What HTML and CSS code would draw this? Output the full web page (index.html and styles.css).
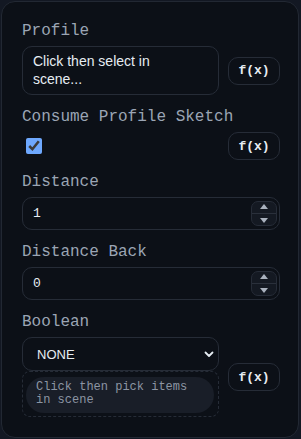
FILE: index.html
```html
<!DOCTYPE html>
<html lang="en">
<head>
<meta charset="utf-8">
<title>Extrude</title>
<link rel="stylesheet" href="styles.css">
</head>
<body>
<div class="panel">
  <div class="field">
    <div class="label">Profile</div>
    <div class="row">
      <div class="picker">Click then select in scene...</div>
      <button class="fx">f(x)</button>
    </div>
  </div>

  <div class="field">
    <div class="label">Consume Profile Sketch</div>
    <div class="row">
      <div class="check-wrap"><input type="checkbox" class="check" checked></div>
      <button class="fx">f(x)</button>
    </div>
  </div>

  <div class="field">
    <div class="label">Distance</div>
    <div class="number">
      <input class="num-input" type="text" value="1">
      <span class="spin"><span class="up"></span><span class="sep"></span><span class="down"></span></span>
    </div>
  </div>

  <div class="field">
    <div class="label">Distance Back</div>
    <div class="number">
      <input class="num-input" type="text" value="0">
      <span class="spin"><span class="up"></span><span class="sep"></span><span class="down"></span></span>
    </div>
  </div>

  <div class="field">
    <div class="label">Boolean</div>
    <div class="row">
      <div class="bool-col">
        <div class="select">
          <span>NONE</span>
          <svg class="chev" width="10" height="7" viewBox="0 0 10 7"><path d="M1.5 1.5 L5 5 L8.5 1.5" fill="none" stroke="#e6edf3" stroke-width="1.8" stroke-linecap="round" stroke-linejoin="round"/></svg>
        </div>
        <div class="items">
          <div class="pill">Click then pick items in scene</div>
        </div>
      </div>
      <button class="fx">f(x)</button>
    </div>
  </div>
</div>
</body>
</html>
```

FILE: styles.css
```css
html, body {
  margin: 0;
  padding: 0;
  background: #131823;
}
body {
  padding: 1px 0 0 1px;
  width: 301px;
  height: 439px;
  box-sizing: border-box;
  overflow: hidden;
}
.panel {
  width: 298px;
  height: 437px;
  box-sizing: border-box;
  background: #0c1017;
  border: 1px solid #222833;
  border-radius: 14px;
  padding: 19px 18px 19px 20px;
  display: flex;
  flex-direction: column;
  gap: 12px;
}
.field {
  display: flex;
  flex-direction: column;
  gap: 5px;
}
.label {
  font-family: "Liberation Mono", monospace;
  font-size: 16px;
  line-height: 20px;
  color: #9ba5b4;
}
.row {
  display: flex;
  align-items: center;
  gap: 9px;
}
.picker {
  flex: 1;
  height: 49px;
  box-sizing: border-box;
  border: 1px solid #262c37;
  border-radius: 10px;
  padding: 5px 40px 5px 10px;
  font-family: "Liberation Sans", Arial, sans-serif;
  font-size: 14px;
  line-height: 18px;
  color: #e6edf3;
}
.fx {
  width: 52px;
  height: 28px;
  box-sizing: border-box;
  background: transparent;
  border: 1px solid #262c37;
  border-radius: 10px;
  font-family: "Liberation Mono", monospace;
  font-weight: bold;
  font-size: 13px;
  color: #e6edf3;
  padding: 0;
  margin: 0;
}
.check-wrap {
  flex: 1;
  display: flex;
  align-items: center;
}
.check {
  width: 16px;
  height: 16px;
  margin: 0 0 0 4px;
  accent-color: #6ea8fe;
}
.number {
  display: flex;
  align-items: center;
  height: 33px;
  box-sizing: border-box;
  border: 1px solid #262c37;
  border-radius: 10px;
  padding: 0 2px 0 10px;
}
.num-input {
  flex: 1;
  min-width: 0;
  background: transparent;
  border: none;
  outline: none;
  padding: 0;
  font-family: "Liberation Mono", monospace;
  font-size: 13px;
  color: #e6edf3;
}
.spin {
  width: 26px;
  height: 25px;
  box-sizing: border-box;
  border: 1px solid #262c37;
  border-radius: 7px;
  background: #141922;
  display: flex;
  flex-direction: column;
  align-items: center;
  justify-content: center;
  gap: 4px;
}
.sep {
  width: 24px;
  height: 1px;
  background: #2a303b;
}
.up, .down {
  width: 0;
  height: 0;
  border-left: 4.5px solid transparent;
  border-right: 4.5px solid transparent;
}
.up { border-bottom: 5px solid #a9b1bd; }
.down { border-top: 5px solid #a9b1bd; }
.bool-col {
  flex: 1;
  display: flex;
  flex-direction: column;
}
.select {
  height: 34px;
  box-sizing: border-box;
  border: 1px solid #262c37;
  border-radius: 10px;
  display: flex;
  align-items: center;
  justify-content: space-between;
  padding: 0 4px 0 14px;
  font-family: "Liberation Sans", Arial, sans-serif;
  font-size: 13px;
  color: #e6edf3;
}
.chev { display: block; }
.items {
  height: 46px;
  box-sizing: border-box;
  border: 1px dashed #262c37;
  border-radius: 8px;
  padding: 5px 4px 3px 3px;
}
.pill {
  height: 36px;
  box-sizing: border-box;
  background: #191e28;
  border-radius: 18px;
  padding: 4px 10px;
  font-family: "Liberation Mono", monospace;
  font-size: 12px;
  line-height: 13px;
  color: #8c95a3;
}
```
